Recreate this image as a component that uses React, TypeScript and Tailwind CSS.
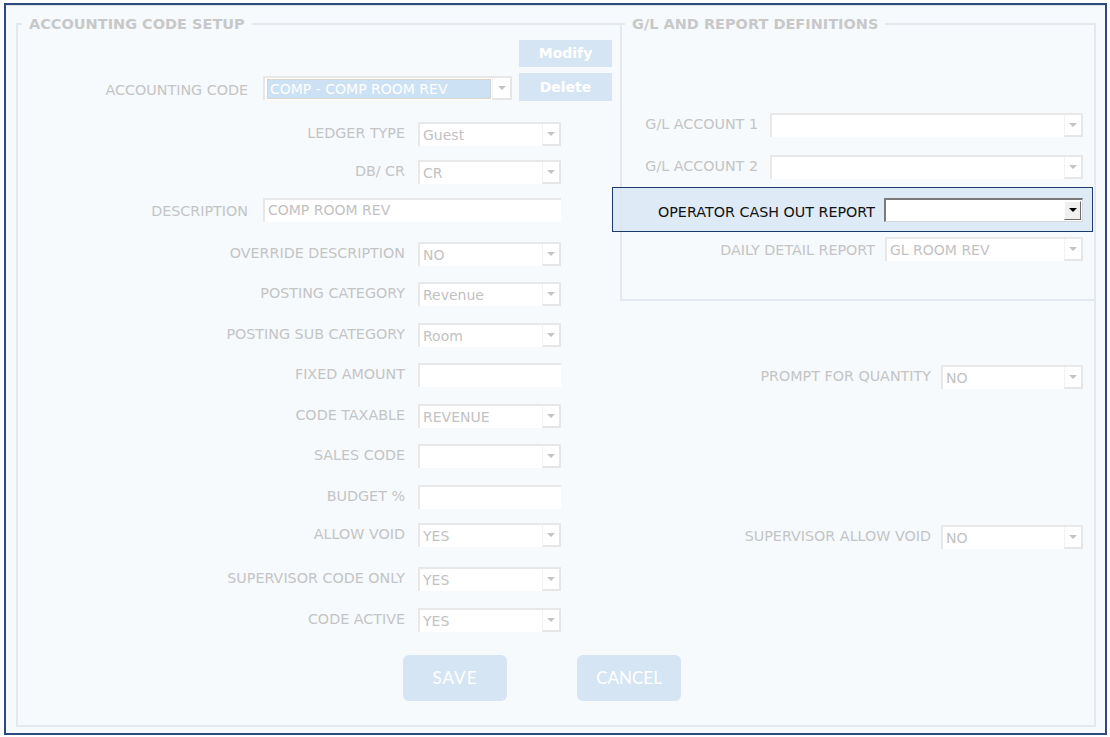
import clsx from 'clsx'

type Row = {
  label: string
  value?: string
  kind?: 'select' | 'text'
  wide?: boolean
  mt: string
}

const leftRows: Row[] = [
  { label: 'LEDGER TYPE', value: 'Guest', mt: 'mt-[21px]' },
  { label: 'DB/ CR', value: 'CR', mt: 'mt-[14px]' },
  { label: 'DESCRIPTION', value: 'COMP ROOM REV', kind: 'text', wide: true, mt: 'mt-[14px]' },
  { label: 'OVERRIDE DESCRIPTION', value: 'NO', mt: 'mt-[20px]' },
  { label: 'POSTING CATEGORY', value: 'Revenue', mt: 'mt-[16px]' },
  { label: 'POSTING SUB CATEGORY', value: 'Room', mt: 'mt-[17px]' },
  { label: 'FIXED AMOUNT', kind: 'text', mt: 'mt-[16px]' },
  { label: 'CODE TAXABLE', value: 'REVENUE', mt: 'mt-[17px]' },
  { label: 'SALES CODE', mt: 'mt-[16px]' },
  { label: 'BUDGET %', kind: 'text', mt: 'mt-[17px]' },
  { label: 'ALLOW VOID', value: 'YES', mt: 'mt-[14px]' },
  { label: 'SUPERVISOR CODE ONLY', value: 'YES', mt: 'mt-[20px]' },
  { label: 'CODE ACTIVE', value: 'YES', mt: 'mt-[17px]' },
]

const labelCls = 'text-[14.3px] text-[#c4c4c4] whitespace-nowrap'

function Arrow({ dark = false }: { dark?: boolean }) {
  return (
    <span
      className={clsx(
        'block w-0 h-0 border-l-[4px] border-r-[4px] border-t-[4px] border-l-transparent border-r-transparent',
        dark ? 'border-t-black' : 'border-t-[#c4c4c4]',
      )}
    />
  )
}

function Select({ value = '', className }: { value?: string; className: string }) {
  return (
    <div className={clsx('flex h-[24px] shrink-0 bg-white border-t-2 border-l-2 border-[#e8e8e8]', className)}>
      <div className="flex-1 min-w-0 pl-[3px] pt-[1px] text-[14px] leading-[20px] text-[#c2c2c2] whitespace-nowrap overflow-hidden">
        {value}
      </div>
      <div className="w-[19px] flex items-center justify-center border-l border-l-[#f2f2f2] border-r-2 border-b-2 border-r-[#e6e6e6] border-b-[#e6e6e6]">
        <Arrow />
      </div>
    </div>
  )
}

function TextBox({ value = '', className }: { value?: string; className: string }) {
  return (
    <div
      className={clsx(
        'h-[24px] shrink-0 bg-white border-t-2 border-l-2 border-[#e8e8e8] pl-[3px] text-[14px] leading-[20px] text-[#c2c2c2] whitespace-nowrap',
        className,
      )}
    >
      {value}
    </div>
  )
}

function LeftRow({ row }: { row: Row }) {
  const width = row.wide ? 'w-[298px]' : 'w-[143px]'
  return (
    <div className={clsx('flex items-center h-[24px]', row.mt)}>
      <div
        className={clsx(
          labelCls,
          'text-right',
          row.wide ? 'w-[230px] mr-[15px] pt-[4px]' : 'w-[387px] mr-[13px]',
        )}
      >
        {row.label}
      </div>
      {row.kind === 'text' ? (
        <TextBox value={row.value} className={width} />
      ) : (
        <Select value={row.value} className={width} />
      )}
    </div>
  )
}

export default function App() {
  return (
    <div className="w-[1110px] h-[737px] bg-white pl-[4px] pt-[3px] font-['DejaVu_Sans',sans-serif]">
      <div className="w-[1103px] h-[732px] border-2 border-[#2b4a7d] bg-[#f6fafd]">
        <div className="h-[1px] bg-[#dde2e8]" />

        <div className="relative ml-[10px] mt-[17px] w-[1080px] h-[704px] border-2 border-[#e4e9ef] flex flex-col">
          <span className="absolute left-[4px] -top-[9px] px-[7px] bg-[#f6fafd] text-[14.5px] font-bold text-[#c8c8c8] leading-[17px]">
            ACCOUNTING CODE SETUP
          </span>
          <span className="absolute left-[607px] -top-[9px] px-[7px] bg-[#f6fafd] text-[14.5px] font-bold text-[#c8c8c8] leading-[17px]">
            G/L AND REPORT DEFINITIONS
          </span>

          <div className="flex">
            {/* left column */}
            <div className="w-[602px] flex flex-col">
              <div className="flex mt-[15px]">
                <div className="flex items-end mb-[1px]">
                  <div className={clsx(labelCls, 'w-[230px] mr-[15px] text-right -mb-[1px]')}>ACCOUNTING CODE</div>
                  <div className="flex h-[24px] w-[249px] bg-white border-t-2 border-l-2 border-[#e8e8e8]">
                    <div className="flex-1 my-[1px] ml-[2px] mr-[1px] bg-[#cde1f4] border border-dotted border-[#d8cdbf] pl-[2px] text-[14px] leading-[18px] text-white whitespace-nowrap overflow-hidden">
                      COMP - COMP ROOM REV
                    </div>
                    <div className="w-[20px] flex items-center justify-center border-l border-l-[#f2f2f2] border-r-2 border-b-2 border-r-[#e6e6e6] border-b-[#e6e6e6]">
                      <Arrow />
                    </div>
                  </div>
                </div>
                <div className="ml-[7px] w-[93px] flex flex-col gap-[6px]">
                  <div className="h-[27px] bg-[#d6e5f3] text-white font-bold text-[14px] flex items-center justify-center">
                    Modify
                  </div>
                  <div className="h-[28px] bg-[#d6e5f3] text-white font-bold text-[14px] flex items-center justify-center">
                    Delete
                  </div>
                </div>
              </div>

              {leftRows.map((r) => (
                <LeftRow key={r.label} row={r} />
              ))}
            </div>

            {/* right column */}
            <div className="flex-1 flex flex-col">
              <div className="h-[276px] border-l-2 border-b-2 border-[#e4e9ef] flex flex-col">
                <div className="mt-[88px] flex items-center justify-end pr-[11px] gap-[12px]">
                  <span className={labelCls}>G/L ACCOUNT 1</span>
                  <Select className="w-[313px]" />
                </div>
                <div className="mt-[18px] flex items-center justify-end pr-[11px] gap-[12px]">
                  <span className={labelCls}>G/L ACCOUNT 2</span>
                  <Select className="w-[313px]" />
                </div>
                <div className="mt-[8px] -ml-[10px] mr-[1px] h-[45px] border border-[#1d3a6c] bg-[#d9e6f3]/85 flex items-center justify-end pr-[9px] gap-[9px]">
                  <span className="text-[14.3px] text-[#111111] whitespace-nowrap pt-[6px]">OPERATOR CASH OUT REPORT</span>
                  <div className="flex h-[24px] w-[199px] bg-white border-t-2 border-l-2 border-[#7b7b7b] border-r border-b border-r-[#d8d8d8] border-b-[#d8d8d8]">
                    <div className="flex-1" />
                    <div className="w-[17px] my-[1px] mr-[1px] flex items-center justify-center bg-[#f0f0f0] border border-t-white border-l-white border-r-[#6b6b6b] border-b-[#6b6b6b]">
                      <Arrow dark />
                    </div>
                  </div>
                </div>
                <div className="mt-[5px] flex items-center justify-end pr-[11px] gap-[10px]">
                  <span className={clsx(labelCls, 'pt-[3px]')}>DAILY DETAIL REPORT</span>
                  <Select value="GL ROOM REV" className="w-[198px]" />
                </div>
              </div>

              <div className="mt-[64px] flex items-center justify-end pr-[11px] gap-[10px]">
                <span className={labelCls}>PROMPT FOR QUANTITY</span>
                <Select value="NO" className="w-[142px]" />
              </div>
              <div className="mt-[136px] flex items-center justify-end pr-[11px] gap-[10px]">
                <span className={labelCls}>SUPERVISOR ALLOW VOID</span>
                <Select value="NO" className="w-[142px]" />
              </div>
            </div>
          </div>

          <div className="flex mt-[23px] ml-[385px] gap-[70px] font-['Lato',sans-serif]">
            <div className="w-[104px] h-[46px] rounded-[6px] bg-[#d5e5f3] text-white text-[17px] tracking-[1px] flex items-center justify-center">
              SAVE
            </div>
            <div className="w-[104px] h-[46px] rounded-[6px] bg-[#d5e5f3] text-white text-[17px] flex items-center justify-center">
              CANCEL
            </div>
          </div>
        </div>
      </div>
    </div>
  )
}
